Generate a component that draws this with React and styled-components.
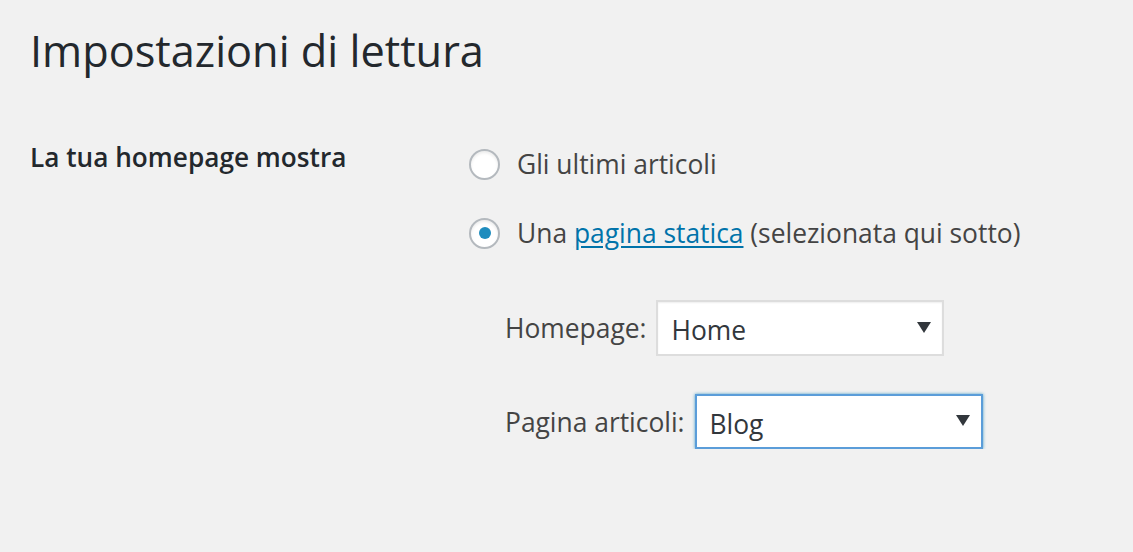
import React from "react";
import styled, { createGlobalStyle } from "styled-components";

const GlobalStyle = createGlobalStyle`
  html, body {
    margin: 0;
    padding: 0;
    background: #f1f1f1;
  }
  body {
    font-family: "Open Sans", "Noto Sans", sans-serif;
    color: #23282d;
  }
`;

const Wrap = styled.div`
  padding: 18px 30px 0 30px;
`;

const Title = styled.h1`
  margin: 0;
  font-size: 43.3px;
  font-weight: 400;
  line-height: 66px;
  color: #23282d;
`;

const FormRow = styled.div`
  display: flex;
  margin-top: 62px;
`;

const RowLabel = styled.div`
  width: 439px;
  flex-shrink: 0;
  margin-top: -7px;
  font-size: 26.2px;
  font-weight: 600;
  line-height: 36px;
  color: #23282d;
`;

const Fields = styled.div`
  display: flex;
  flex-direction: column;
`;

const RadioLine = styled.label`
  display: flex;
  align-items: center;
  gap: 17px;
  height: 36px;
  margin-bottom: 33px;
  font-size: 26.4px;
  color: #444;
`;

const Radio = styled.span`
  width: 31px;
  height: 31px;
  box-sizing: border-box;
  border-radius: 50%;
  border: 2px solid #b4b9be;
  background: #fff;
  box-shadow: inset 0 2px 3px rgba(0, 0, 0, 0.08);
  display: flex;
  align-items: center;
  justify-content: center;
  &::after {
    content: "";
    width: 12px;
    height: 12px;
    border-radius: 50%;
    background: ${(p) => (p.checked ? "#1e8cbe" : "transparent")};
  }
`;

const Link = styled.a`
  color: #0073aa;
  text-decoration: underline;
  text-underline-offset: 3px;
`;

const SelectList = styled.div`
  display: flex;
  flex-direction: column;
  gap: 38px;
  padding-left: 36px;
  margin-top: 16px;
`;

const SelectLine = styled.div`
  display: flex;
  align-items: center;
  gap: 10px;
  font-size: 26.4px;
  color: #444;
`;

const Select = styled.div`
  width: 288px;
  height: ${(p) => (p.focused ? "55px" : "56px")};
  box-sizing: border-box;
  background: #fff;
  border: 2px solid ${(p) => (p.focused ? "#5b9dd9" : "#dddddd")};
  box-shadow: ${(p) =>
    p.focused ? "0 0 3px rgba(30, 140, 190, 0.8)" : "inset 0 1px 2px rgba(0,0,0,0.07)"};
  display: flex;
  align-items: center;
  justify-content: space-between;
  padding: 4px 11px 0 13px;
  font-size: 26.4px;
  color: #32373c;
`;

const Arrow = styled.span`
  width: 0;
  height: 0;
  border-left: 7px solid transparent;
  border-right: 7px solid transparent;
  border-top: 11px solid #32373c;
  margin-bottom: 6px;
`;

export default function App() {
  return (
    <>
      <GlobalStyle />
      <Wrap>
        <Title>Impostazioni di lettura</Title>
        <FormRow>
          <RowLabel>La tua homepage mostra</RowLabel>
          <Fields>
            <RadioLine>
              <Radio />
              Gli ultimi articoli
            </RadioLine>
            <RadioLine>
              <Radio checked />
              <span>
                Una <Link href="#">pagina statica</Link> (selezionata qui sotto)
              </span>
            </RadioLine>
            <SelectList>
              <SelectLine>
                Homepage:
                <Select>
                  Home
                  <Arrow />
                </Select>
              </SelectLine>
              <SelectLine>
                Pagina articoli:
                <Select focused>
                  Blog
                  <Arrow />
                </Select>
              </SelectLine>
            </SelectList>
          </Fields>
        </FormRow>
      </Wrap>
    </>
  );
}
